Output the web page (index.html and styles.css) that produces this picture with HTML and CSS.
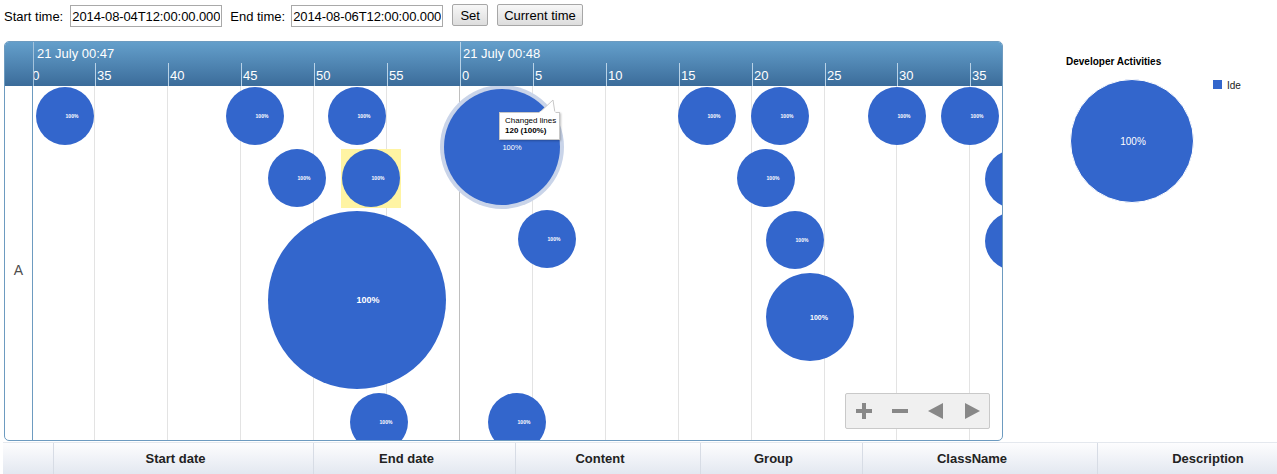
FILE: index.html
```html
<!DOCTYPE html>
<html>
<head>
<meta charset="utf-8">
<link rel="stylesheet" href="styles.css">
</head>
<body>
<div class="toolbar">
  <label class="lbl">Start time:</label>
  <input class="time-input" type="text" value="2014-08-04T12:00:00.000">
  <label class="lbl lbl-end">End time:</label>
  <input class="time-input" type="text" value="2014-08-06T12:00:00.000">
  <button class="btn btn-set">Set</button>
  <button class="btn">Current time</button>
</div>

<div class="main">
  <div class="timeline">
    <div class="tl-header">
      <div class="tl-side"></div>
      <div class="tl-axis">
        <div class="major-line" style="left:426px"></div>
        <span class="major-label" style="left:3px">21 July 00:47</span>
        <span class="major-label" style="left:429px">21 July 00:48</span>

        <div class="minor-line" style="left:-11px"></div><span class="minor-label" style="left:-9px">30</span>
        <div class="minor-line" style="left:61px"></div><span class="minor-label" style="left:63px">35</span>
        <div class="minor-line" style="left:134px"></div><span class="minor-label" style="left:136px">40</span>
        <div class="minor-line" style="left:207px"></div><span class="minor-label" style="left:209px">45</span>
        <div class="minor-line" style="left:280px"></div><span class="minor-label" style="left:282px">50</span>
        <div class="minor-line" style="left:353px"></div><span class="minor-label" style="left:355px">55</span>
        <span class="minor-label" style="left:428px">0</span>
        <div class="minor-line" style="left:499px"></div><span class="minor-label" style="left:501px">5</span>
        <div class="minor-line" style="left:572px"></div><span class="minor-label" style="left:574px">10</span>
        <div class="minor-line" style="left:645px"></div><span class="minor-label" style="left:647px">15</span>
        <div class="minor-line" style="left:718px"></div><span class="minor-label" style="left:720px">20</span>
        <div class="minor-line" style="left:791px"></div><span class="minor-label" style="left:793px">25</span>
        <div class="minor-line" style="left:863px"></div><span class="minor-label" style="left:865px">30</span>
        <div class="minor-line" style="left:936px"></div><span class="minor-label" style="left:938px">35</span>
      </div>
    </div>
    <div class="tl-body">
      <div class="tl-groups"><span class="group-label">A</span></div>
      <div class="tl-canvas">
        <div class="grid-line" style="left:61px"></div>
        <div class="grid-line" style="left:134px"></div>
        <div class="grid-line" style="left:207px"></div>
        <div class="grid-line" style="left:280px"></div>
        <div class="grid-line" style="left:353px"></div>
        <div class="grid-line grid-major" style="left:426px"></div>
        <div class="grid-line" style="left:499px"></div>
        <div class="grid-line" style="left:572px"></div>
        <div class="grid-line" style="left:645px"></div>
        <div class="grid-line" style="left:718px"></div>
        <div class="grid-line" style="left:791px"></div>
        <div class="grid-line" style="left:863px"></div>
        <div class="grid-line" style="left:936px"></div>

        <div class="selected-box" style="left:308px;top:63px;width:60px;height:59px"></div>
        <div class="halo" style="left:407px;top:-1px;width:124px;height:124px"></div>

        <div class="bubble" style="left:3px;top:1px;width:58px;height:58px"><span class="bl bl-s">100%</span></div>
        <div class="bubble" style="left:193px;top:1px;width:58px;height:58px"><span class="bl bl-s">100%</span></div>
        <div class="bubble" style="left:295px;top:1px;width:58px;height:58px"><span class="bl bl-s">100%</span></div>
        <div class="bubble" style="left:645px;top:1px;width:58px;height:58px"><span class="bl bl-s">100%</span></div>
        <div class="bubble" style="left:718px;top:1px;width:58px;height:58px"><span class="bl bl-s">100%</span></div>
        <div class="bubble" style="left:835px;top:1px;width:58px;height:58px"><span class="bl bl-s">100%</span></div>
        <div class="bubble" style="left:908px;top:1px;width:58px;height:58px"><span class="bl bl-s">100%</span></div>
        <div class="bubble" style="left:235px;top:63px;width:58px;height:58px"><span class="bl bl-s">100%</span></div>
        <div class="bubble" style="left:309px;top:63px;width:58px;height:58px"><span class="bl bl-s">100%</span></div>
        <div class="bubble" style="left:704px;top:63px;width:58px;height:58px"><span class="bl bl-s">100%</span></div>
        <div class="bubble" style="left:952px;top:64px;width:58px;height:58px"></div>
        <div class="bubble" style="left:485px;top:124px;width:58px;height:58px"><span class="bl bl-s">100%</span></div>
        <div class="bubble" style="left:733px;top:125px;width:58px;height:58px"><span class="bl bl-s">100%</span></div>
        <div class="bubble" style="left:952px;top:126px;width:58px;height:58px"></div>
        <div class="bubble" style="left:235px;top:125px;width:178px;height:178px"><span class="bl bl-l">100%</span></div>
        <div class="bubble" style="left:733px;top:187px;width:88px;height:88px"><span class="bl bl-m">100%</span></div>
        <div class="bubble" style="left:317px;top:307px;width:58px;height:58px"><span class="bl bl-s">100%</span></div>
        <div class="bubble" style="left:455px;top:307px;width:58px;height:58px"><span class="bl bl-s">100%</span></div>
        <div class="bubble" style="left:411px;top:3px;width:116px;height:116px"><span class="bl bl-h">100%</span></div>

        <div class="tooltip">
          <svg class="tip-tail" width="30" height="14" viewBox="0 0 30 14"><polygon points="6,14 22,14 20,1" fill="#fff" stroke="#c8c8c8" stroke-width="1"/><rect x="6.5" y="12.5" width="16" height="3" fill="#fff"/></svg>
          <div class="tip-line">Changed lines</div>
          <div class="tip-line tip-bold">120 (100%)</div>
        </div>

        <div class="nav">
          <span class="nav-btn"><svg width="18" height="18" viewBox="0 0 18 18"><rect x="7" y="1" width="4" height="16" fill="#888"/><rect x="1" y="7" width="16" height="4" fill="#888"/></svg></span>
          <span class="nav-btn"><svg width="18" height="18" viewBox="0 0 18 18"><rect x="1" y="7" width="16" height="4" fill="#888"/></svg></span>
          <span class="nav-btn"><svg width="18" height="18" viewBox="0 0 18 18"><polygon points="1,9 16,1 16,17" fill="#888"/></svg></span>
          <span class="nav-btn"><svg width="18" height="18" viewBox="0 0 18 18"><polygon points="17,9 2,1 2,17" fill="#888"/></svg></span>
        </div>
      </div>
    </div>
  </div>

  <div class="pie-panel">
    <svg width="274" height="200" viewBox="0 0 274 200">
      <text x="63" y="24" class="pie-title">Developer Activities</text>
      <circle cx="129" cy="100" r="61.5" fill="#3366cc" stroke="#fff" stroke-width="1"/>
      <text x="130" y="104" class="pie-label" text-anchor="middle">100%</text>
      <rect x="210" y="39" width="9" height="9" fill="#3366cc"/>
      <text x="224" y="48" class="pie-legend">Ide</text>
    </svg>
  </div>
</div>

<div class="data-header">
  <div class="dh-cell"></div>
  <div class="dh-cell">Start date</div>
  <div class="dh-cell">End date</div>
  <div class="dh-cell">Content</div>
  <div class="dh-cell">Group</div>
  <div class="dh-cell">ClassName</div>
  <div class="dh-cell dh-last">Description</div>
</div>
</body>
</html>
```

FILE: styles.css
```css
html, body {
  margin: 0;
  padding: 0;
  overflow: hidden;
  background: #fff;
  font-family: "Liberation Sans", Arial, sans-serif;
  color: #000;
}

.toolbar {
  height: 41px;
  box-sizing: border-box;
  padding: 4px 0 0 4px;
  display: flex;
  align-items: flex-start;
  font-size: 13px;
}

.lbl {
  line-height: 23px;
  margin-top: 1px;
  margin-right: 7px;
}

.lbl-end {
  margin-left: 8px;
  margin-right: 6px;
}

.time-input {
  width: 152px;
  height: 22px;
  box-sizing: border-box;
  margin: 1px 0 0 0;
  padding: 0 1px;
  border: 1px solid #a9a9a9;
  font-family: "Liberation Sans", Arial, sans-serif;
  font-size: 13px;
  letter-spacing: -0.1px;
  color: #000;
  outline: none;
}

.btn {
  height: 22px;
  box-sizing: border-box;
  margin-left: 9px;
  padding: 0 6px;
  border: 1px solid #a7a7a7;
  border-radius: 2px;
  background: linear-gradient(#f7f7f7, #dddddd);
  font-family: "Liberation Sans", Arial, sans-serif;
  font-size: 13px;
  color: #000;
}

.btn-set {
  width: 36px;
  padding: 0;
}

.main {
  display: flex;
  align-items: flex-start;
  height: 401px;
}

.timeline {
  margin-left: 4px;
  width: 999px;
  height: 400px;
  box-sizing: border-box;
  border: 1px solid #6d9bc0;
  border-radius: 5px;
  overflow: hidden;
  display: flex;
  flex-direction: column;
}

.tl-header {
  height: 44px;
  flex: none;
  display: flex;
  background: linear-gradient(#649fcb, #3b6c9a);
}

.tl-side {
  width: 28px;
  flex: none;
  border-right: 1px solid #a4c3dc;
}

.tl-axis {
  position: relative;
  flex: 1;
  overflow: hidden;
  color: #fff;
  font-size: 13px;
}

.major-line {
  position: absolute;
  top: 0;
  bottom: 0;
  width: 1px;
  background: #b8d2e7;
}

.major-label {
  position: absolute;
  top: 4px;
  white-space: nowrap;
  line-height: 15px;
}

.minor-line {
  position: absolute;
  top: 21px;
  bottom: 0;
  width: 1px;
  background: #b8d2e7;
}

.minor-label {
  position: absolute;
  top: 26px;
  line-height: 15px;
}

.tl-body {
  flex: 1;
  display: flex;
  min-height: 0;
}

.tl-groups {
  width: 28px;
  flex: none;
  border-right: 1px solid #6d9bc0;
  display: flex;
  align-items: center;
  justify-content: center;
  padding-top: 14px;
  box-sizing: border-box;
}

.group-label {
  font-size: 14px;
  color: #4d4d4d;
}

.tl-canvas {
  position: relative;
  flex: 1;
  overflow: hidden;
}

.grid-line {
  position: absolute;
  top: 0;
  bottom: 0;
  width: 1px;
  background: #e3e3e3;
}

.grid-major {
  background: #bfbfbf;
}

.selected-box {
  position: absolute;
  background: #fff4a3;
}

.halo {
  position: absolute;
  border-radius: 50%;
  background: #c9d4e9;
}

.bubble {
  position: absolute;
  border-radius: 50%;
  background: #3366cc;
  display: flex;
  align-items: center;
  justify-content: center;
}

.bl {
  color: #fff;
  white-space: nowrap;
  font-family: "Liberation Sans", Arial, sans-serif;
}

.bl-s {
  font-size: 5px;
  font-weight: bold;
  margin-left: 14px;
}

.bl-m {
  font-size: 7px;
  font-weight: bold;
  margin-left: 18px;
}

.bl-h {
  font-size: 7.5px;
  margin-left: 20px;
}

.bl-l {
  font-size: 9px;
  font-weight: bold;
  margin-left: 22px;
}

.tooltip {
  position: absolute;
  left: 466px;
  top: 26px;
  width: 61px;
  height: 28px;
  box-sizing: border-box;
  padding: 3px 0 0 5px;
  background: #fff;
  border: 1px solid #c8c8c8;
  box-shadow: 1px 1px 2px rgba(0, 0, 0, 0.25);
  font-size: 8px;
  color: #000;
  line-height: 10px;
}

.tip-tail {
  position: absolute;
  left: 33px;
  top: -14px;
}

.tip-bold {
  font-weight: bold;
}

.nav {
  position: absolute;
  left: 812px;
  top: 307px;
  width: 145px;
  height: 36px;
  box-sizing: border-box;
  background: #f0f0f0;
  border: 1px solid #c9c9c9;
  border-radius: 2px;
  display: flex;
  align-items: center;
  padding-left: 9px;
  gap: 18px;
}

.nav-btn {
  display: flex;
  width: 18px;
  height: 18px;
}

.pie-panel {
  width: 274px;
  flex: none;
}

.pie-title {
  font-family: "Liberation Sans", Arial, sans-serif;
  font-size: 10px;
  font-weight: bold;
  fill: #000;
}

.pie-label {
  font-family: "Liberation Sans", Arial, sans-serif;
  font-size: 10px;
  fill: #fff;
}

.pie-legend {
  font-family: "Liberation Sans", Arial, sans-serif;
  font-size: 10px;
  fill: #222;
}

.data-header {
  margin-left: 3px;
  display: grid;
  grid-template-columns: 51px 260px 202px 185px 162px 235px 1fr;
  height: 32px;
  border-top: 1px solid #e4e8ee;
  background: linear-gradient(#fdfdfe, #e2e7f0);
}

.dh-cell {
  display: flex;
  align-items: center;
  justify-content: center;
  padding-right: 16px;
  padding-bottom: 2px;
  border-right: 1px solid #d7dce5;
  font-size: 13px;
  font-weight: bold;
  color: #222;
}

.dh-last {
  border-right: none;
  padding-left: 57px;
}
```
